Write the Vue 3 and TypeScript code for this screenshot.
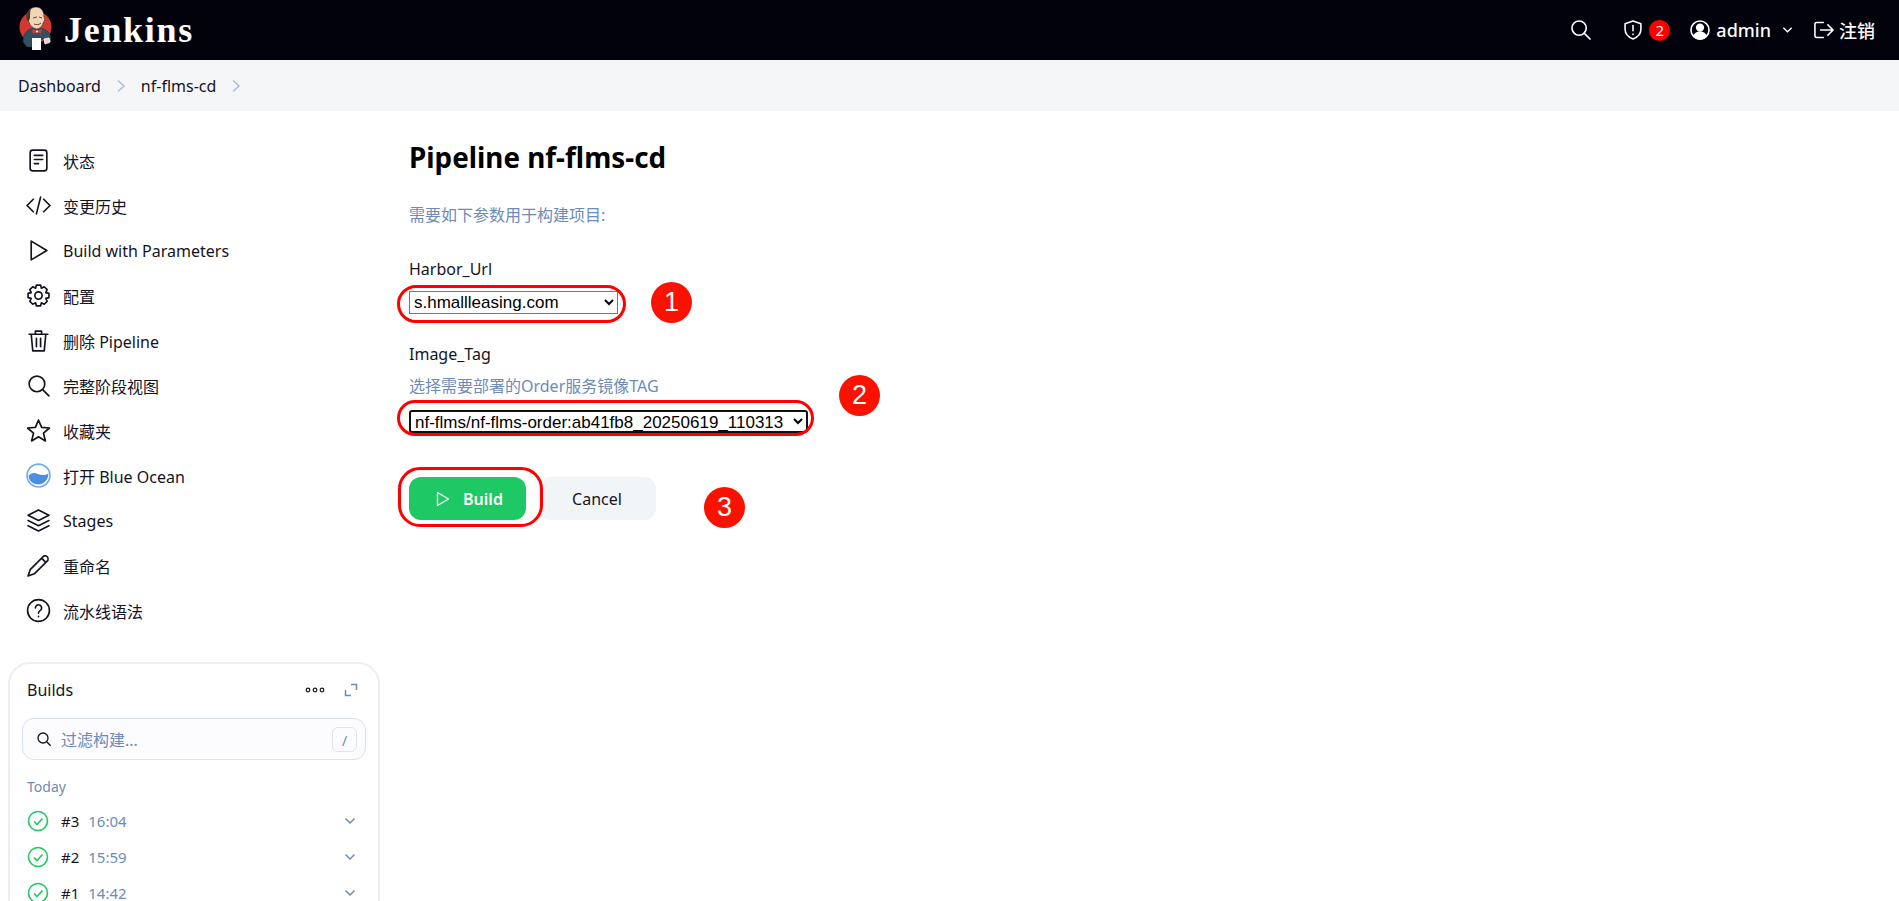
<template>
  <div class="page">
    <header class="topbar">
      <div class="brand">
        <svg class="logo" viewBox="0 0 34 46">
          <circle cx="16.500" cy="20" r="16" fill="#d33833" />
          <path d="M4 35c0-8 4-13 11-14h6c7 1 11 5 11 13l-2 3-4-1-3-4H13v8H8z" fill="#335061" stroke="#1d2a33" stroke-width=".5" />
          <path d="M8 11C8 4 12 0 17 0s8 4 8 10c1 1 1 4-1 6-1 4-4 6-7 6-3-1-6-3-7-7-1-1-2-2-2-4z" fill="#f0d6b7" stroke="#49362b" stroke-width=".7" />
          <path d="M9 14C6 9 8 4 12 1c-1 3-1 7-1 10l-1 3z" fill="#49362b" />
          <path d="M14 11l4-1M20 10l3 1M15 17c2 1 5 1 7-1" fill="none" stroke="#49362b" stroke-width=".9" />
          <path d="M13 22l5 2 5-2-1 5-4-2-4 2z" fill="#d33833" />
          <circle cx="18" cy="24.500" r="1.100" fill="#fff" />
          <rect x="13" y="31" width="9" height="12" fill="#fff" />
          <path d="M25 32l5-1 1 4-5 2z" fill="#f0d6b7" stroke="#fff" stroke-width=".8" />
        </svg>
        <span class="brand-name">Jenkins</span>
      </div>
      <div class="top-actions">
        <svg class="top-icon search-icon" viewBox="2 2 21 21"><circle cx="10.500" cy="10.500" r="7.500" /><path d="M16 16l6 6" /></svg>
        <div class="alert">
          <svg class="top-icon" viewBox="2.500 1.500 19 21.500"><path d="M12 2.500l8.500 3v6c0 5-3.500 8.500-8.500 10.500-5-2-8.500-5.500-8.500-10.500v-6z" /><path d="M12 7.500v5.500" /><path d="M12 16.500v.5" /></svg>
          <span class="badge">2</span>
        </div>
        <div class="user">
          <svg class="top-icon" viewBox="1.500 1.500 21 21"><circle cx="12" cy="12" r="9.500" /><circle cx="12" cy="9.500" r="3.500" fill="#fff" /><path d="M5.500 18.500c1.500-3 4-4 6.500-4s5 1 6.500 4c-3.500 4-9.500 4-13 0z" fill="#fff" /></svg>
          <span>admin</span>
          <svg class="caret" viewBox="0 0 12 8"><path d="M1.500 1.500L6 6l4.500-4.500" /></svg>
        </div>
        <div class="logout">
          <svg class="top-icon" viewBox="2 3 21.500 18"><path d="M12 4H5a2 2 0 0 0-2 2v12a2 2 0 0 0 2 2h7" /><path d="M9 12h13M17 6.500l5.500 5.500-5.500 5.500" /></svg>
          <span>注销</span>
        </div>
      </div>
    </header>

    <nav class="crumbs">
      <span>Dashboard</span>
      <svg class="crumb-sep" viewBox="0 0 10 14"><path d="M2 1.500L8 7l-6 5.500" /></svg>
      <span>nf-flms-cd</span>
      <svg class="crumb-sep" viewBox="0 0 10 14"><path d="M2 1.500L8 7l-6 5.500" /></svg>
    </nav>

    <div class="body-row">
      <aside class="sidebar">
        <ul class="tasks">
          <li v-for="task in tasks" :key="task.label" class="task">
            <svg class="task-icon" viewBox="0 0 24 24" v-html="task.icon"></svg>
            <span>{{ task.label }}</span>
          </li>
        </ul>

        <section class="builds">
          <div class="builds-head">
            <span class="builds-title">Builds</span>
            <div class="builds-tools">
              <svg class="dots" viewBox="0 0 20 6"><circle cx="3" cy="3" r="1.800" /><circle cx="10" cy="3" r="1.800" /><circle cx="17" cy="3" r="1.800" /></svg>
              <svg class="expand" viewBox="0 0 14 14"><path d="M7 1.500h5.500V7M1.500 7v5.500H7" /></svg>
            </div>
          </div>
          <div class="filter">
            <svg class="filter-icon" viewBox="0 0 24 24"><circle cx="10.500" cy="10.500" r="7.500" /><path d="M16 16l6 6" /></svg>
            <span class="filter-text">过滤构建...</span>
            <span class="kbd">/</span>
          </div>
          <div class="day">Today</div>
          <div v-for="b in builds" :key="b.id" class="build">
            <svg class="ok" viewBox="0 0 22 22"><circle cx="11" cy="11" r="9.500" /><path d="M7 11.500l3 3 5.500-6" /></svg>
            <span class="build-id">{{ b.id }}</span>
            <span class="build-time">{{ b.time }}</span>
            <svg class="build-caret" viewBox="0 0 12 8"><path d="M1.500 1.500L6 6l4.500-4.500" /></svg>
          </div>
        </section>
      </aside>

      <main class="content">
        <h1>Pipeline nf-flms-cd</h1>
        <p class="hint">需要如下参数用于构建项目:</p>

        <div class="param first">
          <label>Harbor_Url</label>
          <select class="pick">
            <option>s.hmallleasing.com</option>
          </select>
        </div>

        <div class="param">
          <label>Image_Tag</label>
          <div class="param-desc">选择需要部署的Order服务镜像TAG</div>
          <select class="pick focused">
            <option>nf-flms/nf-flms-order:ab41fb8_20250619_110313</option>
          </select>
        </div>

        <div class="actions">
          <button class="btn-build">
            <svg viewBox="0 0 14 16"><path d="M1.500 1.500l11 6.500-11 6.500z" /></svg>
            Build
          </button>
          <button class="btn-cancel">Cancel</button>
        </div>

        <!-- 标注 -->
        <div class="mark oval-1"></div>
        <div class="mark oval-2"></div>
        <div class="mark oval-3"></div>
        <div class="num num-1">1</div>
        <div class="num num-2">2</div>
        <div class="num num-3">3</div>
      </main>
    </div>
  </div>
</template>

<script setup lang="ts">
interface Task {
  label: string
  icon: string
}

const tasks: Task[] = [
  { label: '状态', icon: '<rect x="4" y="2" width="16" height="20" rx="2.500"/><path d="M8 7h8M8 11h8M8 15h4"/>' },
  { label: '变更历史', icon: '<path d="M7 6l-6 6 6 6M17 6l6 6-6 6M14 4l-4 16"/>' },
  { label: 'Build with Parameters', icon: '<path d="M5 3l15 9-15 9z"/>' },
  { label: '配置', icon: '<circle cx="12" cy="12" r="3.500"/><path d="M10 2h4l.8 3 2.700-1.400 2.800 2.800L19 9.200l3 .8v4l-3 .8 1.300 2.800-2.800 2.800-2.700-1.400-.8 3h-4l-.8-3-2.700 1.400-2.800-2.800L5 14.800 2 14v-4l3-.8-1.300-2.800 2.800-2.800L9.200 5z"/>' },
  { label: '删除 Pipeline', icon: '<path d="M3 6h18M9 6V3h6v3M5 6l1.500 16h11L19 6M10 10v8M14 10v8"/>' },
  { label: '完整阶段视图', icon: '<circle cx="10.500" cy="10.500" r="7.500"/><path d="M16 16l6 6"/>' },
  { label: '收藏夹', icon: '<path d="M12 2l3 7 7.500.6-5.700 5 1.800 7.400L12 18l-6.600 4 1.800-7.400-5.700-5L9 9z"/>' },
  { label: '打开 Blue Ocean', icon: '<circle cx="12" cy="12" r="11" stroke="#74adee" fill="#fff"/><path d="M2.500 12c3-3 6-3 9-1.500s7 1.500 10-.5c0 6-4 10.500-9.500 10.500S2.500 17 2.500 12z" fill="#4a90e2" stroke="none"/>' },
  { label: 'Stages', icon: '<path d="M12 2l10 5-10 5L2 7zM2 12l10 5 10-5M2 17l10 5 10-5"/>' },
  { label: '重命名', icon: '<path d="M2 22l2-6L17 3a3 3 0 0 1 4 4L8 20zM15 5l4 4"/>' },
  { label: '流水线语法', icon: '<circle cx="12" cy="12" r="10.500"/><path d="M9 9.500a3 3 0 1 1 4.500 2.600c-1 .6-1.500 1.200-1.500 2.400M12 17.500v.5"/>' }
]

const builds = [
  { id: '#3', time: '16:04' },
  { id: '#2', time: '15:59' },
  { id: '#1', time: '14:42' }
]
</script>

<style>
html,
body {
  margin: 0;
  overflow: hidden;
  background: #fff;
}
</style>

<style scoped>
.page {
  height: 901px;
  overflow: hidden;
  display: flex;
  flex-direction: column;
  font-family: "Noto Sans", "Noto Sans CJK SC", sans-serif;
  font-size: 16px;
  color: #14141f;
}

/* 顶栏 */
.topbar {
  height: 60px;
  flex: none;
  display: flex;
  align-items: center;
  justify-content: space-between;
  padding: 0 24px 0 19px;
  background: #02020c;
  color: #fff;
}

.brand {
  display: flex;
  align-items: center;
  gap: 11px;
}

.logo {
  width: 34px;
  height: 46px;
}

.brand-name {
  font-family: "Liberation Serif", serif;
  font-size: 36px;
  font-weight: 700;
  letter-spacing: 1.700px;
}

.top-actions {
  display: flex;
  align-items: center;
  font-size: 18px;
  font-weight: 500;
}

.top-icon {
  width: 20px;
  height: 20px;
  flex: none;
  fill: none;
  stroke: #fff;
  stroke-width: 1.700;
  stroke-linecap: round;
  stroke-linejoin: round;
}

.search-icon {
  margin-right: 32px;
}

.alert {
  display: flex;
  align-items: center;
  gap: 6px;
  margin-right: 20px;
}

.badge {
  width: 21px;
  height: 21px;
  border-radius: 50%;
  background: #f00;
  font-size: 15px;
  font-weight: 400;
  line-height: 21px;
  text-align: center;
}

.user {
  display: flex;
  align-items: center;
  gap: 6px;
  margin-right: 21px;
}

.caret {
  width: 11px;
  height: 8px;
  margin-left: 5px;
  fill: none;
  stroke: #fff;
  stroke-width: 1.500;
}

.logout {
  display: flex;
  align-items: center;
  gap: 5px;
}

/* 面包屑 */
.crumbs {
  height: 51px;
  flex: none;
  display: flex;
  align-items: center;
  gap: 15px;
  padding: 0 18px;
  background: #f4f6f8;
}

.crumb-sep {
  width: 10px;
  height: 14px;
  fill: none;
  stroke: #a9bcdc;
  stroke-width: 1.500;
}

.body-row {
  flex: 1;
  display: flex;
  min-height: 0;
}

/* 侧栏 */
.sidebar {
  width: 380px;
  flex: none;
  padding: 27px 0 0 8px;
  box-sizing: border-box;
}

.tasks {
  list-style: none;
  margin: 0;
  padding: 0 0 0 18px;
}

.task {
  height: 45px;
  display: flex;
  align-items: center;
  gap: 12px;
}

.task-icon {
  width: 25px;
  height: 25px;
  flex: none;
  fill: none;
  stroke: #14141f;
  stroke-width: 1.600;
  stroke-linecap: round;
  stroke-linejoin: round;
}

.builds {
  margin-top: 29px;
  height: 300px;
  padding: 14px 12px;
  border: 2px solid #ebeef5;
  border-radius: 22px;
  box-sizing: border-box;
}

.builds-head {
  display: flex;
  align-items: center;
  justify-content: space-between;
  height: 24px;
  padding: 0 8px 0 5px;
}

.builds-tools {
  display: flex;
  align-items: center;
  gap: 19px;
}

.dots {
  width: 20px;
  height: 6px;
  fill: none;
  stroke: #14141f;
  stroke-width: 1.200;
}

.expand {
  width: 14px;
  height: 14px;
  fill: none;
  stroke: #6d8ab8;
  stroke-width: 1.500;
}

.filter {
  height: 42px;
  margin-top: 16px;
  display: flex;
  align-items: center;
  padding: 0 8px 0 13px;
  background: #fcfcfe;
  border: 1.500px solid #d9e0f0;
  border-radius: 12px;
  box-sizing: border-box;
}

.filter-icon {
  width: 16px;
  height: 16px;
  fill: none;
  stroke: #14141f;
  stroke-width: 2;
}

.filter-text {
  flex: 1;
  margin-left: 9px;
  color: #6d8ab8;
}

.kbd {
  width: 25px;
  height: 25px;
  line-height: 25px;
  text-align: center;
  font-size: 14px;
  color: #6d8ab8;
  border: 1.500px solid #dde3f1;
  border-radius: 6px;
  box-sizing: border-box;
}

.day {
  margin: 17px 0 7px;
  padding-left: 5px;
  font-size: 14px;
  color: #6d8ab8;
}

.build {
  height: 36px;
  display: flex;
  align-items: center;
  padding: 0 5px;
  font-size: 15px;
}

.ok {
  width: 22px;
  height: 22px;
  fill: none;
  stroke: #1ec864;
  stroke-width: 1.600;
}

.build-id {
  margin-left: 12px;
}

.build-time {
  flex: 1;
  margin-left: 9px;
  color: #6d8ab8;
}

.build-caret {
  width: 12px;
  height: 8px;
  margin-right: 5px;
  fill: none;
  stroke: #6d8ab8;
  stroke-width: 1.500;
}

/* 主内容 */
.content {
  position: relative;
  flex: 1;
  padding: 24px 0 0 29px;
}

h1 {
  margin: 0;
  font-size: 27.800px;
  line-height: 44px;
  font-weight: 700;
  color: #000;
}

.hint {
  margin: 24px 0 0;
  line-height: 24px;
  color: #6d8ab8;
}

.param {
  margin-top: 28px;
}

.param.first {
  margin-top: 30px;
}

.param label {
  display: block;
  line-height: 24px;
}

.param-desc {
  margin-top: 8px;
  line-height: 24px;
  color: #6d8ab8;
}

.pick {
  display: block;
  width: 209px;
  height: 23px;
  margin-top: 10px;
  padding: 0;
  font-family: "Liberation Sans", sans-serif;
  font-size: 17px;
  color: #000;
  background: #fff;
  border: 1px solid #767676;
  border-radius: 0;
}

.pick.focused {
  width: 399px;
  margin: 12px 0 0;
  border: 2px solid #101010;
  border-radius: 3px;
}

.actions {
  display: flex;
  gap: 12px;
  margin-top: 44px;
}

.actions button {
  height: 43px;
  border: none;
  border-radius: 12px;
  font-family: inherit;
  font-size: 16px;
}

.btn-build {
  width: 117px;
  display: flex;
  align-items: center;
  justify-content: center;
  gap: 13px;
  padding: 0 0 0 4px;
  font-weight: 600;
  background: #1ec864;
  color: #fff;
}

.btn-build svg {
  width: 14px;
  height: 16px;
  fill: none;
  stroke: #fff;
  stroke-width: 1.300;
  stroke-linejoin: round;
}

.btn-cancel {
  width: 118px;
  font-weight: 400;
  background: #f2f5f8;
  color: #14141f;
}

/* 红色标注 */
.mark {
  position: absolute;
  border: 3px solid #f00;
  box-sizing: border-box;
  border-radius: 30px;
}

.oval-1 {
  left: 17px;
  top: 174px;
  width: 229px;
  height: 38px;
}

.oval-2 {
  left: 17px;
  top: 289px;
  width: 417px;
  height: 36px;
}

.oval-3 {
  left: 18px;
  top: 356px;
  width: 145px;
  height: 60px;
  border-radius: 22px;
}

.num {
  position: absolute;
  width: 41px;
  height: 41px;
  border-radius: 50%;
  background: #fb1100;
  color: #fff;
  font-family: "Liberation Sans", sans-serif;
  font-size: 27px;
  line-height: 41px;
  text-align: center;
}

.num-1 {
  left: 271px;
  top: 171px;
}

.num-2 {
  left: 459px;
  top: 264px;
}

.num-3 {
  left: 324px;
  top: 376px;
}
</style>
